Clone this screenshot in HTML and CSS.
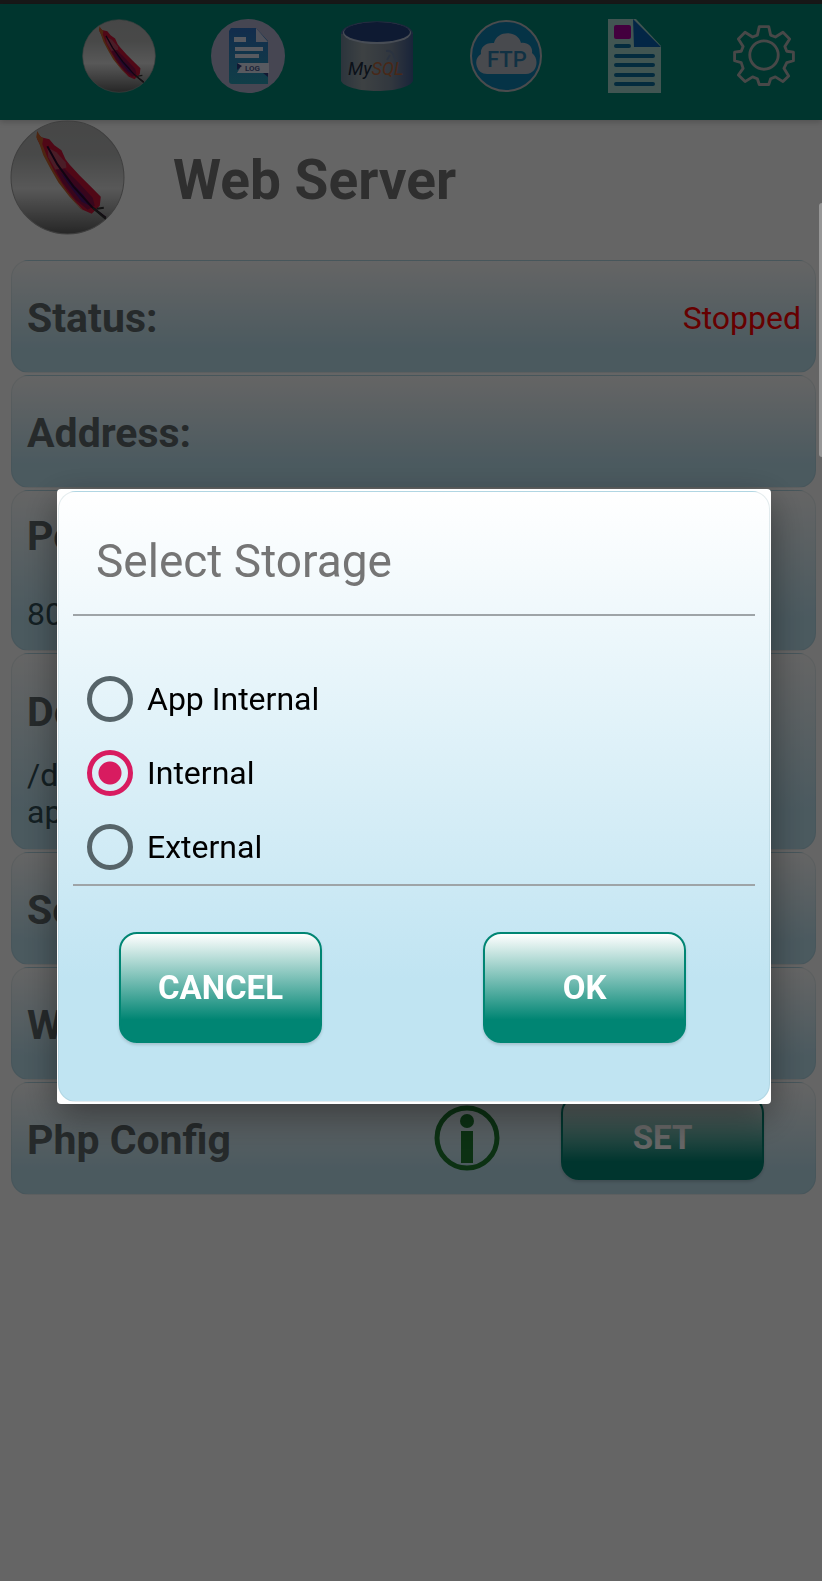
FILE: index.html
```
<!DOCTYPE html>
<html lang="en">
<head>
  <meta charset="UTF-8">
  <meta name="viewport" content="width=device-width, initial-scale=1">
  <title>Web Server</title>
  <link rel="stylesheet" href="styles.css">
</head>
<body>

<svg class="defs" width="0" height="0" aria-hidden="true">
  <defs>
    <linearGradient id="metal" x1="0" y1="0" x2="0" y2="1">
      <stop offset="0" stop-color="#b0b0b0"/>
      <stop offset=".3" stop-color="#b4b6b5"/>
      <stop offset=".6" stop-color="#dcdcdc"/>
      <stop offset=".8" stop-color="#a0a0a0"/>
      <stop offset="1" stop-color="#606060"/>
    </linearGradient>
    <linearGradient id="logpage" x1="0" y1="0" x2="0" y2="1">
      <stop offset="0" stop-color="#2f6fc0"/>
      <stop offset="1" stop-color="#2a9cb4"/>
    </linearGradient>
    <linearGradient id="drum" x1="0" y1="0" x2="1" y2="0">
      <stop offset="0" stop-color="#6e8498"/>
      <stop offset=".3" stop-color="#9aa4a8"/>
      <stop offset=".7" stop-color="#7c8a9c"/>
      <stop offset="1" stop-color="#3f5a90"/>
    </linearGradient>
    <symbol id="feather" viewBox="0 0 114 114">
      <circle cx="57" cy="57" r="56" fill="url(#metal)" stroke="#9c9c9c"/>
      <path d="M28 14l3 3 8 2 5 6 7 5 4 9 4 5 10 11 12 12 9 9-1 9-8 8-9-4-11-12-10-13-8-13-7-12-6-14-3-6z" fill="#c81438"/>
      <path d="M27 11l3 5 3 2-1 6 5 13 7 14 12 19 12 15 5 5-3-2-11-12-11-14-8-14-7-13-4-12-3-6z" fill="#c0602c"/>
      <path d="M37 27l9 5 9 10 1 5-10 4-8-14z" fill="#b84a62"/>
      <path d="M45 49l9-1 14 14 14 15 2 8-7 4-12-10-13-17z" fill="#8c1048"/>
      <path d="M50 52l8 7 15 15 6 11-8-4-13-17z" fill="#501470"/>
      <path d="M37 26l10 18 16 22 18 20 14 11" fill="none" stroke="#2a0a2c" stroke-width="2"/>
      <path d="M82 87l13 11M86 88l7-1" fill="none" stroke="#303030" stroke-width="2"/>
    </symbol>
  </defs>
</svg>

<div class="statusbar"></div>
<nav class="toolbar">
  <button type="button" aria-label="Web server"><svg viewBox="0 0 114 114"><use href="#feather"/></svg></button>
  <button type="button" aria-label="Logs">
    <svg viewBox="0 0 74 74">
      <circle cx="37" cy="37" r="37" fill="#aeb0cc"/>
      <path d="M20 9h25l12 13v43H21q-3 0-3-3V12z" fill="url(#logpage)"/>
      <path d="M45 9l12 14H45z" fill="#c8cce4"/>
      <path d="M23 18h12v5H23zM24 28h28v4H24zM24 35h24v4H24z" fill="#dce0f0"/>
      <path d="M26 44h32v10H26l3-5z" fill="#dce0f0"/>
      <path d="M26 44l5 3-5 4zM52 54h5v4z" fill="#2c3c80"/>
      <text x="34" y="52" class="log-text">LOG</text>
    </svg>
  </button>
  <button type="button" aria-label="MySQL">
    <svg viewBox="0 0 74 74">
      <path d="M1 14v48c3 6 18 10 36 10s33-4 36-10V14z" fill="url(#drum)"/>
      <path d="M1 15C1-2 73-2 73 15z" fill="#4c6498"/>
      <ellipse cx="37" cy="14" rx="34" ry="11" fill="#b4c0d4"/>
      <ellipse cx="37" cy="13" rx="33" ry="10" fill="#24427e"/>
      <path d="M46 32q7-1 8 6l3 5M50 36l-3 5" fill="none" stroke="#6c80a0" stroke-width="2"/>
      <text x="8" y="56" class="my-text">My<tspan class="sql-text">SQL</tspan></text>
    </svg>
  </button>
  <button type="button" aria-label="FTP">
    <svg viewBox="0 0 74 74">
      <circle cx="37" cy="37" r="35" fill="#0d7fb0" stroke="#b8bcc0" stroke-width="2"/>
      <path d="M18 55a11 11 0 0 1-6-20c-1-6 4-12 13-11 3-13 24-13 27 0 7-1 12 4 11 10 8 6 5 21-6 21z" fill="#b4b8c4"/>
      <text x="18" y="48" class="ftp-text">FTP</text>
    </svg>
  </button>
  <button type="button" aria-label="Pages">
    <svg viewBox="0 0 74 74">
      <path d="M10 0h28l25 27v47H10z" fill="#a4d4cc"/>
      <path d="M35 0l28 28H36z" fill="#0860b0"/>
      <rect x="16" y="6" width="17" height="14" rx="2" fill="#a8009c"/>
      <path d="M18 27h13M18 37h37M18 46h37M18 56h37M18 65h37" fill="none" stroke="#0c6c9c" stroke-width="4" stroke-linecap="round"/>
    </svg>
  </button>
  <button type="button" aria-label="Settings">
    <svg viewBox="-2 -1 78 78" fill="none" stroke="#b4b4b4" stroke-width="3" stroke-linejoin="round">
      <circle cx="37" cy="37" r="15"/>
      <path d="M32 7h10l2 9 5 2 8-5 7 7-5 8 2 5 7 1v9l-7 2-3 6 5 8-6 6-8-5-5 2-2 6H32l-2-6-5-2-8 5-7-7 5-7-2-6-7-2v-9l7-1 2-5-5-8 7-7 8 5 5-2z"/>
    </svg>
  </button>
</nav>

<header class="page-title">
  <svg class="logo" viewBox="0 0 114 114"><use href="#feather"/></svg>
  <h1>Web Server</h1>
</header>

<main class="cards">
  <section class="card">
    <h2>Status:</h2>
    <span class="stopped">Stopped</span>
  </section>
  <section class="card">
    <h2>Address:</h2>
  </section>
  <section class="card port">
    <h2>Port</h2>
    <p>8080</p>
  </section>
  <section class="card root">
    <h2>Doc:</h2>
    <p>/data/<br>app</p>
  </section>
  <section class="card">
    <h2>Server</h2>
  </section>
  <section class="card">
    <h2>Web</h2>
  </section>
  <section class="card php">
    <h2>Php Config</h2>
    <svg class="info" viewBox="0 0 66 66">
      <circle cx="33" cy="33" r="30" fill="none" stroke="#1e7a30" stroke-width="5"/>
      <circle cx="33" cy="16" r="7" fill="#1e7a30"/>
      <path d="M27 26h12v32H27z" fill="#1e7a30"/>
    </svg>
    <button type="button" class="btn btn-set">SET</button>
  </section>
</main>

<div class="overlay">
  <form class="dialog" role="dialog" aria-labelledby="dialog-title">
    <div class="dialog-body">
      <h2 id="dialog-title">Select Storage</h2>
      <div class="options">
        <label><input type="radio" name="storage" value="app"> App Internal</label>
        <label><input type="radio" name="storage" value="internal" checked> Internal</label>
        <label><input type="radio" name="storage" value="external"> External</label>
      </div>
      <div class="actions">
        <button type="button" class="btn">CANCEL</button>
        <button type="button" class="btn">OK</button>
      </div>
    </div>
  </form>
</div>
<div class="scroll-thumb"></div>

</body>
</html>
```
FILE: styles.css
```
* { box-sizing: border-box; }
body { margin:0; min-height:100vh; background:#fcfcfc; font-family:Roboto, sans-serif; color:#000; }
h1, h2, p { margin:0; }
button { font-family:inherit; cursor:pointer; }
.defs { position:absolute; }

.statusbar { height:4px; background:#3c3c3c; }
.toolbar { display:flex; justify-content:flex-end; align-items:flex-start; gap:55px; height:116px; padding:15px 21px 0 0; background:#008573; box-shadow:0 2px 6px rgba(0,0,0,.2); }
.toolbar button { width:74px; height:74px; padding:0; border:0; background:none; }
.toolbar svg { display:block; width:100%; height:100%; }
.log-text { font-size:8px; font-weight:bold; fill:#4a5a90; }
.my-text { font-size:18px; font-style:italic; fill:#1c2c40; }
.sql-text { fill:#b4643c; }
.ftp-text { font-size:22px; font-weight:500; fill:#2c7ca8; }

.page-title { display:flex; align-items:center; height:115px; padding-left:10px; gap:48px; }
.logo { width:115px; height:115px; }
.page-title h1 { padding-top:4px; font-size:55px; line-height:64px; color:#757575; }

.cards { display:flex; flex-direction:column; gap:2px; padding:25px 6px 0 11px; }
.card { display:flex; align-items:center; min-height:113px; padding:2px 14px 0 15px; border:1px solid rgba(120,160,170,.15); border-radius:18px; background:linear-gradient(#fcfcfc, #bbe0ee 80%); }
.card h2 { font-size:41px; line-height:48px; color:#5f696c; }
.card p { font-size:32px; line-height:37px; color:#335058; }
.stopped { margin-left:auto; font-size:32px; color:#ff0000; }
.port, .root { flex-direction:column; align-items:flex-start; }
.port { padding-top:21px; padding-bottom:17px; gap:36px; }
.root { padding-top:34px; padding-bottom:18px; gap:21px; }
.info { width:66px; height:66px; margin:0 0 4px auto; }

.btn { width:203px; height:111px; border:2px solid #008573; border-radius:18px; background:linear-gradient(#fff, #008573 80%); color:#fff; font-size:33px; font-weight:bold; box-shadow:0 2px 3px rgba(0,0,0,.15); }
.btn-set { height:85px; margin:0 37px 4px 61px; }

.overlay { position:fixed; top:0; left:0; width:100%; height:100%; display:flex; align-items:center; padding:11px 51px 0 57px; background:rgba(0,0,0,.6); }
.dialog { width:100%; padding:2px 1px; border-radius:4px; background:#fff; box-shadow:0 12px 36px rgba(0,0,0,.4); }
.dialog-body { padding:42px 14px 58px; border:1px solid rgba(120,160,170,.2); border-radius:18px; background:linear-gradient(#fff, #c0e4f2 80%); }
.dialog-body h2 { padding:0 23px 26px; font-size:46px; line-height:54px; font-weight:normal; color:#757575; }
.options { display:flex; flex-direction:column; padding:46px 14px 0; border-top:2px solid #9ea4a7; border-bottom:2px solid #9ea4a7; }
.options label { display:flex; align-items:center; gap:14px; height:74px; font-size:32px; }
.options input { appearance:none; width:46px; height:46px; margin:0; border:5px solid #566469; border-radius:50%; }
.options input:checked { border-color:#d81b60; background:radial-gradient(#d81b60 0 11px, transparent 12px); }
.actions { display:flex; justify-content:space-between; padding:46px 69px 0 46px; }

.scroll-thumb { position:absolute; top:203px; right:0; width:3px; height:254px; border-radius:3px 0 0 3px; background:#969696; }
```
